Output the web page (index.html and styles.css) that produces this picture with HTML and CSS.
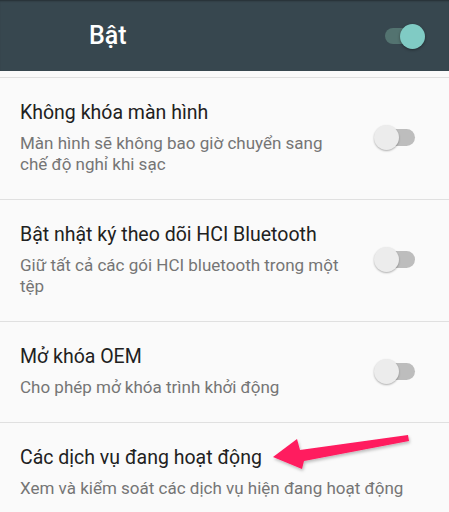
FILE: index.html
```html
<!DOCTYPE html>
<html lang="vi">
<head>
    <meta charset="UTF-8">
    <meta name="viewport" content="width=device-width, initial-scale=1.0">
    <title>Tùy chọn nhà phát triển</title>
    <link rel="stylesheet" href="styles.css">
</head>
<body>
    <!-- Master switch bar -->
    <header class="master-bar">
        <span class="master-title">Bật</span>
        <span class="switch switch-on"><span class="thumb"></span></span>
    </header>

    <div class="gap"></div>

    <!-- Settings list -->
    <ul class="pref-list">
        <li class="pref">
            <div class="pref-text">
                <div class="pref-title">Không khóa màn hình</div>
                <div class="pref-summary">Màn hình sẽ không bao giờ chuyển sang chế độ nghỉ khi sạc</div>
            </div>
            <span class="switch"><span class="thumb"></span></span>
        </li>
        <li class="pref">
            <div class="pref-text">
                <div class="pref-title">Bật nhật ký theo dõi HCI Bluetooth</div>
                <div class="pref-summary">Giữ tất cả các gói HCI bluetooth trong một tệp</div>
            </div>
            <span class="switch"><span class="thumb"></span></span>
        </li>
        <li class="pref">
            <div class="pref-text">
                <div class="pref-title">Mở khóa OEM</div>
                <div class="pref-summary">Cho phép mở khóa trình khởi động</div>
            </div>
            <span class="switch"><span class="thumb"></span></span>
        </li>
        <li class="pref">
            <div class="pref-text">
                <div class="pref-title">Các dịch vụ đang hoạt động</div>
                <div class="pref-summary">Xem và kiểm soát các dịch vụ hiện đang hoạt động</div>
            </div>
        </li>
    </ul>

    <!-- Annotation arrow drawn over the screenshot -->
    <svg class="arrow" width="449" height="512" viewBox="0 0 449 512">
        <defs>
            <filter id="arrowShadow" x="-10%" y="-30%" width="120%" height="160%">
                <feDropShadow dx="1" dy="2" stdDeviation="1.5" flood-color="#000" flood-opacity="0.25"/>
            </filter>
        </defs>
        <polygon points="273,457 297,439 300,450 408,435 409,441 304,461 302,469" fill="#ff1a5e" filter="url(#arrowShadow)"/>
    </svg>
</body>
</html>
```

FILE: styles.css
```css
body {
    margin: 0;
    padding: 0;
    background-color: #fafafa;
    font-family: Roboto, "Noto Sans", Arial, sans-serif;
    width: 449px;
    height: 512px;
    overflow: hidden;
    position: relative;
}

.master-bar {
    height: 71px;
    background-color: #37474f;
    display: flex;
    align-items: center;
    padding: 0 34px 0 89px;
    box-sizing: border-box;
    box-shadow: inset 0 2px 2px -1px rgba(0, 0, 0, 0.35);
}

.master-title {
    flex: 1;
    color: #fff;
    font-size: 25px;
    font-weight: 500;
    padding-bottom: 1px;
}

.gap {
    height: 6px;
}

.pref-list {
    list-style: none;
    margin: 0;
    padding: 0;
}

.pref {
    display: flex;
    align-items: center;
    border-top: 1px solid #e0e0e0;
    padding: 22px 34px 24px 20px;
}

.pref-text {
    flex: 1;
    min-width: 0;
}

.pref-title {
    font-size: 19.5px;
    line-height: 26px;
    color: #212121;
}

.pref-summary {
    margin-top: 7px;
    font-size: 17px;
    line-height: 21px;
    color: #757575;
}

/* switches */
.switch {
    position: relative;
    flex: none;
    width: 40px;
    height: 17px;
    margin-left: 22px;
    border-radius: 9px;
    background-color: #bdbdbd;
}

.switch .thumb {
    position: absolute;
    left: -1px;
    top: -4px;
    width: 25px;
    height: 25px;
    border-radius: 50%;
    background-color: #ececec;
    box-shadow: 0 1px 2px rgba(0, 0, 0, 0.3);
}

.switch-on {
    width: 30px;
    height: 16px;
    background-color: #537370;
}

.switch-on .thumb {
    left: auto;
    right: -10px;
    top: -4px;
    background-color: #80cbc4;
    box-shadow: 0 1px 3px rgba(0, 0, 0, 0.4);
}

.arrow {
    position: absolute;
    left: 0;
    top: 0;
    pointer-events: none;
}
```
